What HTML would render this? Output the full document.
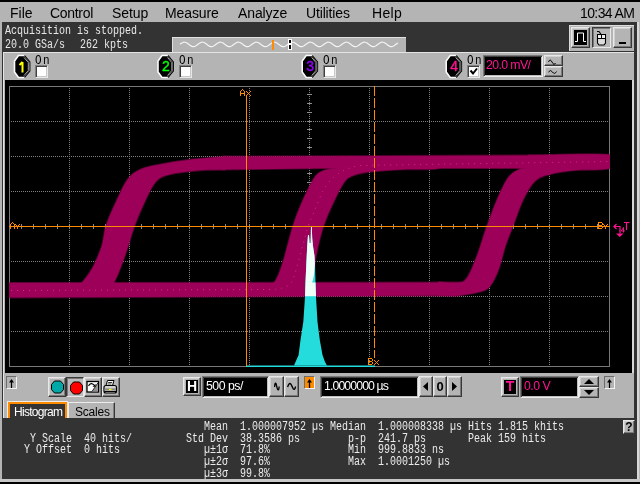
<!DOCTYPE html>
<html><head><meta charset="utf-8">
<style>
*{box-sizing:border-box}
html,body{margin:0;padding:0}
body{width:640px;height:484px;overflow:hidden;background:#b4b4b4;position:relative;font-family:"Liberation Sans",sans-serif}
.a{position:absolute}
.m{position:absolute;top:5px;font-size:14px;line-height:16px;color:#000;white-space:pre}
.mono{position:absolute;font-family:"Liberation Mono",monospace;font-size:10px;line-height:10px;white-space:pre;transform:scaleY(1.2);transform-origin:0 0}
svg{position:absolute;left:0;top:0;overflow:visible}
</style></head><body><div style="position:absolute;left:0;top:0;width:640px;height:484px;overflow:hidden;will-change:transform">
<div class="a" style="left:0px;top:0px;width:640px;height:2px;background:#000"></div>
<div class="m" style="left:10px;letter-spacing:0px">File</div>
<div class="m" style="left:50px;letter-spacing:-0.3px">Control</div>
<div class="m" style="left:112px;letter-spacing:-0.1px">Setup</div>
<div class="m" style="left:165px;letter-spacing:-0.1px">Measure</div>
<div class="m" style="left:238px;letter-spacing:-0.1px">Analyze</div>
<div class="m" style="left:306px;letter-spacing:-0.15px">Utilities</div>
<div class="m" style="left:372px;letter-spacing:0.3px">Help</div>
<div class="m" style="left:580px;letter-spacing:-0.6px">10:34 AM</div>
<div class="a" style="left:2px;top:22px;width:635px;height:457px;background:#333"></div>
<div class="a" style="left:637px;top:22px;width:2px;height:457px;background:#d8d8d8"></div>
<div class="a" style="left:3px;top:52px;width:631px;height:366px;background:#b4b4b4;border-top:1px solid #e4e4e4;border-left:1px solid #e4e4e4"></div>
<div class="mono" style="left:5px;top:26px;color:#e8e8e8">Acquisition is stopped.</div>
<div class="mono" style="left:5px;top:40px;color:#e8e8e8">20.0 GSa/s</div>
<div class="mono" style="left:80px;top:40px;color:#e8e8e8">262 kpts</div>
<div class="a" style="left:172px;top:37px;width:234px;height:15px;background:#b4b4b4;border-top:1px solid #e0e0e0;border-left:1px solid #e0e0e0"></div>
<svg width="640" height="60" viewBox="0 0 640 60"><path d="M180.0,44.32 L181.0,43.58 L182.0,42.93 L183.0,42.46 L184.0,42.22 L185.0,42.25 L186.0,42.53 L187.0,43.05 L188.0,43.72 L189.0,44.48 L190.0,45.22 L191.0,45.87 L192.0,46.34 L193.0,46.58 L194.0,46.55 L195.0,46.27 L196.0,45.75 L197.0,45.08 L198.0,44.32 L199.0,43.58 L200.0,42.93 L201.0,42.46 L202.0,42.22 L203.0,42.25 L204.0,42.53 L205.0,43.05 L206.0,43.72 L207.0,44.48 L208.0,45.22 L209.0,45.87 L210.0,46.34 L211.0,46.58 L212.0,46.55 L213.0,46.27 L214.0,45.75 L215.0,45.08 L216.0,44.32 L217.0,43.58 L218.0,42.93 L219.0,42.46 L220.0,42.22 L221.0,42.25 L222.0,42.53 L223.0,43.05 L224.0,43.72 L225.0,44.48 L226.0,45.22 L227.0,45.87 L228.0,46.34 L229.0,46.58 L230.0,46.55 L231.0,46.27 L232.0,45.75 L233.0,45.08 L234.0,44.32 L235.0,43.58 L236.0,42.93 L237.0,42.46 L238.0,42.22 L239.0,42.25 L240.0,42.53 L241.0,43.05 L242.0,43.72 L243.0,44.48 L244.0,45.22 L245.0,45.87 L246.0,46.34 L247.0,46.58 L248.0,46.55 L249.0,46.27 L250.0,45.75 L251.0,45.08 L252.0,44.32 L253.0,43.58 L254.0,42.93 L255.0,42.46 L256.0,42.22 L257.0,42.25 L258.0,42.53 L259.0,43.05 L260.0,43.72 L261.0,44.48 L262.0,45.22 L263.0,45.87 L264.0,46.34 L265.0,46.58 L266.0,46.55 L267.0,46.27 L268.0,45.75 L269.0,45.08 L270.0,44.32 L271.0,43.58 L272.0,42.93 L273.0,42.46 L274.0,42.22 L275.0,42.25 L276.0,42.53 L277.0,43.05 L278.0,43.72 L279.0,44.48 L280.0,45.22 L281.0,45.87 L282.0,46.34 L283.0,46.58 L284.0,46.55 L285.0,46.27 L286.0,45.75 L287.0,45.08 L288.0,44.32 L289.0,43.58 L290.0,42.93 L291.0,42.46 L292.0,42.22 L293.0,42.25 L294.0,42.53 L295.0,43.05 L296.0,43.72 L297.0,44.48 L298.0,45.22 L299.0,45.87 L300.0,46.34 L301.0,46.58 L302.0,46.55 L303.0,46.27 L304.0,45.75 L305.0,45.08 L306.0,44.32 L307.0,43.58 L308.0,42.93 L309.0,42.46 L310.0,42.22 L311.0,42.25 L312.0,42.53 L313.0,43.05 L314.0,43.72 L315.0,44.48 L316.0,45.22 L317.0,45.87 L318.0,46.34 L319.0,46.58 L320.0,46.55 L321.0,46.27 L322.0,45.75 L323.0,45.08 L324.0,44.32 L325.0,43.58 L326.0,42.93 L327.0,42.46 L328.0,42.22 L329.0,42.25 L330.0,42.53 L331.0,43.05 L332.0,43.72 L333.0,44.48 L334.0,45.22 L335.0,45.87 L336.0,46.34 L337.0,46.58 L338.0,46.55 L339.0,46.27 L340.0,45.75 L341.0,45.08 L342.0,44.32 L343.0,43.58 L344.0,42.93 L345.0,42.46 L346.0,42.22 L347.0,42.25 L348.0,42.53 L349.0,43.05 L350.0,43.72 L351.0,44.48 L352.0,45.22 L353.0,45.87 L354.0,46.34 L355.0,46.58 L356.0,46.55 L357.0,46.27 L358.0,45.75 L359.0,45.08 L360.0,44.32 L361.0,43.58 L362.0,42.93 L363.0,42.46 L364.0,42.22 L365.0,42.25 L366.0,42.53 L367.0,43.05 L368.0,43.72 L369.0,44.48 L370.0,45.22 L371.0,45.87 L372.0,46.34 L373.0,46.58 L374.0,46.55 L375.0,46.27 L376.0,45.75 L377.0,45.08 L378.0,44.32 L379.0,43.58 L380.0,42.93 L381.0,42.46 L382.0,42.22 L383.0,42.25 L384.0,42.53 L385.0,43.05 L386.0,43.72 L387.0,44.48 L388.0,45.22 L389.0,45.87 L390.0,46.34 L391.0,46.58 L392.0,46.55 L393.0,46.27 L394.0,45.75 L395.0,45.08 L396.0,44.32 L397.0,43.58 L398.0,42.93" fill="none" stroke="#f4f4f4" stroke-width="1.2"/><rect x="272" y="40" width="2" height="10" fill="#ff8c00"/><rect x="288" y="39" width="4" height="11" fill="#fff"/><rect x="289" y="40" width="2" height="3" fill="#000"/><rect x="289" y="45" width="2" height="4" fill="#000"/></svg>
<div class="a" style="left:569px;top:25px;width:65px;height:26px;background:#b4b4b4;border-top:1px solid #dcdcdc;border-left:1px solid #dcdcdc"></div>
<div class="a" style="left:571px;top:27px;width:19px;height:21px;background:#b4b4b4;border-top:1px solid #e8e8e8;border-left:1px solid #e8e8e8;border-right:1px solid #383838;border-bottom:1px solid #383838;box-shadow:inset -1px -1px 0 #787878, inset 1px 1px 0 #d0d0d0"></div>
<div class="a" style="left:574px;top:30px;width:13px;height:15px;background:#000"></div>
<div class="a" style="left:592px;top:27px;width:19px;height:21px;background:#b8b8b8;border-top:1px solid #383838;border-left:1px solid #383838;border-right:1px solid #e8e8e8;border-bottom:1px solid #e8e8e8;box-shadow:inset 1px 1px 0 #787878"></div>
<div class="a" style="left:613px;top:27px;width:19px;height:21px;background:#b4b4b4;border-top:1px solid #e8e8e8;border-left:1px solid #e8e8e8;border-right:1px solid #383838;border-bottom:1px solid #383838;box-shadow:inset -1px -1px 0 #787878, inset 1px 1px 0 #d0d0d0"></div>
<div class="a" style="left:619px;top:42px;width:7px;height:2px;background:#000"></div>
<svg width="640" height="60" viewBox="0 0 640 60">
<path d="M575,41.5h2.5v-8.5h6v8.5h2.5" fill="none" stroke="#fff" stroke-width="1"/>
<path d="M597,31.5 h2 l1.8,2.5" stroke="#000" fill="none" stroke-width="1.1"/>
<path d="M597.5,34.5 h8 v8.5 l-1.5,2 h-5 l-1.5,-2 z" fill="#dcdcdc" stroke="#000" stroke-width="1.1"/>
<path d="M597.5,38.5 h8 M601.5,34.5 v4" stroke="#000" stroke-width="1"/>
<rect x="598.2" y="35.2" width="2.8" height="2.8" fill="#f4f4f4"/><rect x="602.2" y="35.2" width="2.8" height="2.8" fill="#f4f4f4"/>
</svg>
<svg width="640" height="90" viewBox="0 0 640 90"><polygon points="18.5,55.5 24.5,55.5 30.0,62 30.0,71 24.5,77.5 18.5,77.5 14.5,72 14.5,61" fill="#000" stroke="#fafafa" stroke-width="1.6"/><path d="M24.5,55.5 L30.0,62 L30.0,71 L24.5,77.5" fill="none" stroke="#101010" stroke-width="1.2"/><path d="M24.0,57.5 L28.3,62.5 L28.3,70.5 L24.0,75.5" fill="none" stroke="#d0d0d0" stroke-width="0.8"/></svg>
<svg width="640" height="90" viewBox="0 0 640 90"><path d="M22.5,62v10.5M19.5,65l3,-3" stroke="#ffff00" stroke-width="2" fill="none"/></svg>
<div class="mono" style="left:35px;top:55px;color:#000;font-size:11px;letter-spacing:1.4px;transform:scaleY(1.15)">On</div>
<div class="a" style="left:35px;top:65px;width:13px;height:13px;background:#fff;border-top:1px solid #808080;border-left:1px solid #808080;border-right:1px solid #e8e8e8;border-bottom:1px solid #e8e8e8;box-shadow:inset 1px 1px 0 #404040, inset -1px -1px 0 #c8c8c8"></div>
<svg width="640" height="90" viewBox="0 0 640 90"><polygon points="162,55.5 168,55.5 173.5,62 173.5,71 168,77.5 162,77.5 158,72 158,61" fill="#000" stroke="#fafafa" stroke-width="1.6"/><path d="M168,55.5 L173.5,62 L173.5,71 L168,77.5" fill="none" stroke="#101010" stroke-width="1.2"/><path d="M167.5,57.5 L171.8,62.5 L171.8,70.5 L167.5,75.5" fill="none" stroke="#d0d0d0" stroke-width="0.8"/></svg>
<div class="a" style="left:158.5px;top:58px;white-space:pre;width:15px;text-align:center;font-size:14px;line-height:17px;font-weight:normal;color:#00ff00;-webkit-text-stroke:0.4px #00ff00">2</div>
<div class="mono" style="left:179px;top:55px;color:#000;font-size:11px;letter-spacing:1.4px;transform:scaleY(1.15)">On</div>
<div class="a" style="left:179px;top:65px;width:13px;height:13px;background:#fff;border-top:1px solid #808080;border-left:1px solid #808080;border-right:1px solid #e8e8e8;border-bottom:1px solid #e8e8e8;box-shadow:inset 1px 1px 0 #404040, inset -1px -1px 0 #c8c8c8"></div>
<svg width="640" height="90" viewBox="0 0 640 90"><polygon points="306.2,55.5 312.2,55.5 317.7,62 317.7,71 312.2,77.5 306.2,77.5 302.2,72 302.2,61" fill="#000" stroke="#fafafa" stroke-width="1.6"/><path d="M312.2,55.5 L317.7,62 L317.7,71 L312.2,77.5" fill="none" stroke="#101010" stroke-width="1.2"/><path d="M311.7,57.5 L316.0,62.5 L316.0,70.5 L311.7,75.5" fill="none" stroke="#d0d0d0" stroke-width="0.8"/></svg>
<div class="a" style="left:302.7px;top:58px;white-space:pre;width:15px;text-align:center;font-size:14px;line-height:17px;font-weight:normal;color:#9400ff;-webkit-text-stroke:0.4px #9400ff">3</div>
<div class="mono" style="left:323px;top:55px;color:#000;font-size:11px;letter-spacing:1.4px;transform:scaleY(1.15)">On</div>
<div class="a" style="left:323px;top:65px;width:13px;height:13px;background:#fff;border-top:1px solid #808080;border-left:1px solid #808080;border-right:1px solid #e8e8e8;border-bottom:1px solid #e8e8e8;box-shadow:inset 1px 1px 0 #404040, inset -1px -1px 0 #c8c8c8"></div>
<svg width="640" height="90" viewBox="0 0 640 90"><polygon points="450.2,55.5 456.2,55.5 461.7,62 461.7,71 456.2,77.5 450.2,77.5 446.2,72 446.2,61" fill="#000" stroke="#fafafa" stroke-width="1.6"/><path d="M456.2,55.5 L461.7,62 L461.7,71 L456.2,77.5" fill="none" stroke="#101010" stroke-width="1.2"/><path d="M455.7,57.5 L460.0,62.5 L460.0,70.5 L455.7,75.5" fill="none" stroke="#d0d0d0" stroke-width="0.8"/></svg>
<div class="a" style="left:446.7px;top:58px;white-space:pre;width:15px;text-align:center;font-size:14px;line-height:17px;font-weight:normal;color:#ff1493;-webkit-text-stroke:0.4px #ff1493">4</div>
<div class="mono" style="left:467px;top:55px;color:#000;font-size:11px;letter-spacing:1.4px;transform:scaleY(1.15)">On</div>
<div class="a" style="left:467px;top:65px;width:13px;height:13px;background:#fff;border-top:1px solid #808080;border-left:1px solid #808080;border-right:1px solid #e8e8e8;border-bottom:1px solid #e8e8e8;box-shadow:inset 1px 1px 0 #404040, inset -1px -1px 0 #c8c8c8"></div>
<svg width="640" height="90" viewBox="0 0 640 90"><path d="M470.5,70.5l2.5,3l4,-5" fill="none" stroke="#000" stroke-width="2"/></svg>
<div class="a" style="left:483px;top:55px;width:60px;height:22px;background:#000;border-top:1px solid #787878;border-left:1px solid #787878;border-right:1px solid #ececec;border-bottom:1px solid #ececec;box-shadow:inset 1px 1px 0 #404040, inset -1px -1px 0 #c0c0c0"></div>
<div class="a" style="left:486px;top:58px;white-space:pre;font-size:12.3px;line-height:14px;letter-spacing:-0.6px;color:#ff1493">20.0 mV/</div>
<div class="a" style="left:544px;top:55px;width:19px;height:11px;background:#b4b4b4;border-top:1px solid #e8e8e8;border-left:1px solid #e8e8e8;border-right:1px solid #383838;border-bottom:1px solid #383838;box-shadow:inset -1px -1px 0 #787878, inset 1px 1px 0 #d0d0d0"></div>
<div class="a" style="left:544px;top:66px;width:19px;height:11px;background:#b4b4b4;border-top:1px solid #e8e8e8;border-left:1px solid #e8e8e8;border-right:1px solid #383838;border-bottom:1px solid #383838;box-shadow:inset -1px -1px 0 #787878, inset 1px 1px 0 #d0d0d0"></div>
<svg width="640" height="90" viewBox="0 0 640 90"><path d="M548.5,62 q1.5,-4 3.5,0 t3.5,1" fill="none" stroke="#000"/><path d="M548.5,72 q2,-3 4,0 t4,-0.5" fill="none" stroke="#000"/></svg>
<div class="a" style="left:5px;top:80px;width:627px;height:293px;background:#000"></div>
<div class="a" style="left:632px;top:80px;width:2px;height:293px;background:#d8d8d8"></div>
<svg width="640" height="484" viewBox="0 0 640 484">
<defs><clipPath id="gc"><rect x="9" y="86" width="601" height="281"/></clipPath>
<clipPath id="wc"><path d="M74.5,289.0C75.8,287.9 79.5,285.7 82.5,282.2C85.5,278.7 89.2,274.1 92.5,268.0C95.8,261.9 99.8,252.4 102.0,245.4C104.2,238.4 103.5,233.6 106.0,226.0C108.5,218.4 113.3,207.8 117.0,200.0C120.7,192.2 123.9,184.2 128.0,179.0C132.1,173.8 135.2,171.6 141.5,169.0C147.8,166.4 157.2,165.1 165.5,163.5C173.8,161.9 181.7,160.7 191.5,159.5C201.3,158.3 219.0,157.0 224.5,156.5L224.5,169.8C220.4,169.9 209.2,169.5 200.0,170.3C190.8,171.1 176.8,172.6 169.5,174.5C162.2,176.4 160.0,177.2 156.0,181.5C152.0,185.8 149.1,192.6 145.5,200.0C141.9,207.4 137.9,216.7 134.5,226.0C131.1,235.3 128.2,246.6 124.8,256.0C121.4,265.4 117.4,276.7 114.0,282.2C110.6,287.7 106.1,287.9 104.5,289.0Z"/><path d="M263.0,289.0C265.0,287.8 271.7,286.0 275.0,281.5C278.3,277.0 280.0,271.2 283.0,262.0C286.0,252.8 289.7,236.3 293.0,226.0C296.3,215.7 299.3,208.2 303.0,200.0C306.7,191.8 311.5,181.9 315.0,177.0C318.5,172.1 320.2,172.0 324.0,170.5C327.8,169.0 335.7,168.4 338.0,168.0L338.0,158.0C354.7,158.0 421.3,156.3 438.0,158.0C454.7,159.7 443.8,166.4 438.0,168.3C432.2,170.2 414.3,168.8 403.0,169.4C391.7,170.0 378.2,170.8 370.0,171.8C361.8,172.8 358.2,173.7 354.0,175.2C349.8,176.7 348.2,176.9 345.0,181.0C341.8,185.1 338.1,192.5 334.5,200.0C330.9,207.5 326.6,216.7 323.5,226.0C320.4,235.3 317.8,246.7 316.0,256.0C314.2,265.3 314.7,276.1 312.5,281.6C310.3,287.1 304.6,287.8 303.0,289.0Z"/><path d="M439.0,282.0C443.0,282.0 456.9,285.8 463.0,282.0C469.1,278.2 471.6,268.8 475.6,259.5C479.6,250.2 483.4,235.9 487.0,226.0C490.6,216.1 493.5,208.0 497.0,200.0C500.5,192.0 504.3,183.1 508.0,178.0C511.7,172.9 515.2,171.2 519.0,169.5C522.8,167.8 529.0,168.2 531.0,168.0L529.0,155.5C542.3,155.4 595.7,152.9 609.0,155.0C622.3,157.1 614.5,165.8 609.0,168.3C603.5,170.8 585.4,169.2 575.7,170.2C566.0,171.1 557.8,172.2 551.0,174.0C544.2,175.8 539.7,176.7 535.0,181.0C530.3,185.3 526.7,192.5 523.0,200.0C519.3,207.5 515.9,218.4 513.0,226.0C510.1,233.6 507.9,238.1 505.5,245.4C503.1,252.7 501.0,263.2 498.4,270.0C495.8,276.8 492.9,282.4 490.0,286.0C487.1,289.6 486.2,289.9 481.0,291.5C475.8,293.1 466.0,294.7 459.0,295.3C452.0,295.9 442.3,295.4 439.0,295.4Z"/><path d="M9,282.8 L463,282.5 L476,286.5 L459,295.6 L9,297.6Z"/><path d="M224,156.5 L610,155.0 L610,168.2 L330,168.2 L224,169.6Z"/></clipPath></defs>
<rect x="9.5" y="86.5" width="600" height="280" fill="none" stroke="#787878" stroke-width="1"/>
<line x1="69.5" y1="88" x2="69.5" y2="366" stroke="#808080" stroke-dasharray="1 1"/>
<line x1="129.5" y1="88" x2="129.5" y2="366" stroke="#808080" stroke-dasharray="1 1"/>
<line x1="189.5" y1="88" x2="189.5" y2="366" stroke="#808080" stroke-dasharray="1 1"/>
<line x1="249.5" y1="88" x2="249.5" y2="366" stroke="#808080" stroke-dasharray="1 1"/>
<line x1="369.5" y1="88" x2="369.5" y2="366" stroke="#808080" stroke-dasharray="1 1"/>
<line x1="429.5" y1="88" x2="429.5" y2="366" stroke="#808080" stroke-dasharray="1 1"/>
<line x1="489.5" y1="88" x2="489.5" y2="366" stroke="#808080" stroke-dasharray="1 1"/>
<line x1="549.5" y1="88" x2="549.5" y2="366" stroke="#808080" stroke-dasharray="1 1"/>
<line x1="11" y1="121.5" x2="609" y2="121.5" stroke="#808080" stroke-dasharray="1 1"/>
<line x1="11" y1="156.5" x2="609" y2="156.5" stroke="#808080" stroke-dasharray="1 1"/>
<line x1="11" y1="191.5" x2="609" y2="191.5" stroke="#808080" stroke-dasharray="1 1"/>
<line x1="11" y1="261.5" x2="609" y2="261.5" stroke="#808080" stroke-dasharray="1 1"/>
<line x1="11" y1="296.5" x2="609" y2="296.5" stroke="#808080" stroke-dasharray="1 1"/>
<line x1="11" y1="331.5" x2="609" y2="331.5" stroke="#808080" stroke-dasharray="1 1"/>
<line x1="309.5" y1="88" x2="309.5" y2="366" stroke="#808080" stroke-dasharray="1 1"/>
<path d="M307,94.5h5 M307,103.5h5 M307,112.5h5 M307,121.5h5 M307,129.5h5 M307,138.5h5 M307,147.5h5 M307,156.5h5 M307,164.5h5 M307,173.5h5 M307,182.5h5 M307,191.5h5 M307,199.5h5 M307,208.5h5 M307,217.5h5 M307,226.5h5 M307,234.5h5 M307,243.5h5 M307,252.5h5 M307,261.5h5 M307,269.5h5 M307,278.5h5 M307,287.5h5 M307,296.5h5 M307,304.5h5 M307,313.5h5 M307,322.5h5 M307,331.5h5 M307,339.5h5 M307,348.5h5 M307,357.5h5 M21.5,224v5 M33.5,224v5 M45.5,224v5 M57.5,224v5 M69.5,224v5 M81.5,224v5 M93.5,224v5 M105.5,224v5 M117.5,224v5 M129.5,224v5 M141.5,224v5 M153.5,224v5 M165.5,224v5 M177.5,224v5 M189.5,224v5 M201.5,224v5 M213.5,224v5 M225.5,224v5 M237.5,224v5 M249.5,224v5 M261.5,224v5 M273.5,224v5 M285.5,224v5 M297.5,224v5 M309.5,224v5 M321.5,224v5 M333.5,224v5 M345.5,224v5 M357.5,224v5 M369.5,224v5 M381.5,224v5 M393.5,224v5 M405.5,224v5 M417.5,224v5 M429.5,224v5 M441.5,224v5 M453.5,224v5 M465.5,224v5 M477.5,224v5 M489.5,224v5 M501.5,224v5 M513.5,224v5 M525.5,224v5 M537.5,224v5 M549.5,224v5 M561.5,224v5 M573.5,224v5 M585.5,224v5 M597.5,224v5" stroke="#8c8c8c" stroke-width="1" fill="none"/>
<g clip-path="url(#gc)"><g fill="none" stroke="#9c0058" stroke-width="1.8" stroke-opacity="0.5"><path d="M74.5,289.0C75.8,287.9 79.5,285.7 82.5,282.2C85.5,278.7 89.2,274.1 92.5,268.0C95.8,261.9 99.8,252.4 102.0,245.4C104.2,238.4 103.5,233.6 106.0,226.0C108.5,218.4 113.3,207.8 117.0,200.0C120.7,192.2 123.9,184.2 128.0,179.0C132.1,173.8 135.2,171.6 141.5,169.0C147.8,166.4 157.2,165.1 165.5,163.5C173.8,161.9 181.7,160.7 191.5,159.5C201.3,158.3 219.0,157.0 224.5,156.5L224.5,169.8C220.4,169.9 209.2,169.5 200.0,170.3C190.8,171.1 176.8,172.6 169.5,174.5C162.2,176.4 160.0,177.2 156.0,181.5C152.0,185.8 149.1,192.6 145.5,200.0C141.9,207.4 137.9,216.7 134.5,226.0C131.1,235.3 128.2,246.6 124.8,256.0C121.4,265.4 117.4,276.7 114.0,282.2C110.6,287.7 106.1,287.9 104.5,289.0Z"/><path d="M263.0,289.0C265.0,287.8 271.7,286.0 275.0,281.5C278.3,277.0 280.0,271.2 283.0,262.0C286.0,252.8 289.7,236.3 293.0,226.0C296.3,215.7 299.3,208.2 303.0,200.0C306.7,191.8 311.5,181.9 315.0,177.0C318.5,172.1 320.2,172.0 324.0,170.5C327.8,169.0 335.7,168.4 338.0,168.0L338.0,158.0C354.7,158.0 421.3,156.3 438.0,158.0C454.7,159.7 443.8,166.4 438.0,168.3C432.2,170.2 414.3,168.8 403.0,169.4C391.7,170.0 378.2,170.8 370.0,171.8C361.8,172.8 358.2,173.7 354.0,175.2C349.8,176.7 348.2,176.9 345.0,181.0C341.8,185.1 338.1,192.5 334.5,200.0C330.9,207.5 326.6,216.7 323.5,226.0C320.4,235.3 317.8,246.7 316.0,256.0C314.2,265.3 314.7,276.1 312.5,281.6C310.3,287.1 304.6,287.8 303.0,289.0Z"/><path d="M439.0,282.0C443.0,282.0 456.9,285.8 463.0,282.0C469.1,278.2 471.6,268.8 475.6,259.5C479.6,250.2 483.4,235.9 487.0,226.0C490.6,216.1 493.5,208.0 497.0,200.0C500.5,192.0 504.3,183.1 508.0,178.0C511.7,172.9 515.2,171.2 519.0,169.5C522.8,167.8 529.0,168.2 531.0,168.0L529.0,155.5C542.3,155.4 595.7,152.9 609.0,155.0C622.3,157.1 614.5,165.8 609.0,168.3C603.5,170.8 585.4,169.2 575.7,170.2C566.0,171.1 557.8,172.2 551.0,174.0C544.2,175.8 539.7,176.7 535.0,181.0C530.3,185.3 526.7,192.5 523.0,200.0C519.3,207.5 515.9,218.4 513.0,226.0C510.1,233.6 507.9,238.1 505.5,245.4C503.1,252.7 501.0,263.2 498.4,270.0C495.8,276.8 492.9,282.4 490.0,286.0C487.1,289.6 486.2,289.9 481.0,291.5C475.8,293.1 466.0,294.7 459.0,295.3C452.0,295.9 442.3,295.4 439.0,295.4Z"/><path d="M9,282.8 L463,282.5 L476,286.5 L459,295.6 L9,297.6Z"/><path d="M224,156.5 L610,155.0 L610,168.2 L330,168.2 L224,169.6Z"/></g><g fill="#9c0058"><path d="M74.5,289.0C75.8,287.9 79.5,285.7 82.5,282.2C85.5,278.7 89.2,274.1 92.5,268.0C95.8,261.9 99.8,252.4 102.0,245.4C104.2,238.4 103.5,233.6 106.0,226.0C108.5,218.4 113.3,207.8 117.0,200.0C120.7,192.2 123.9,184.2 128.0,179.0C132.1,173.8 135.2,171.6 141.5,169.0C147.8,166.4 157.2,165.1 165.5,163.5C173.8,161.9 181.7,160.7 191.5,159.5C201.3,158.3 219.0,157.0 224.5,156.5L224.5,169.8C220.4,169.9 209.2,169.5 200.0,170.3C190.8,171.1 176.8,172.6 169.5,174.5C162.2,176.4 160.0,177.2 156.0,181.5C152.0,185.8 149.1,192.6 145.5,200.0C141.9,207.4 137.9,216.7 134.5,226.0C131.1,235.3 128.2,246.6 124.8,256.0C121.4,265.4 117.4,276.7 114.0,282.2C110.6,287.7 106.1,287.9 104.5,289.0Z"/><path d="M263.0,289.0C265.0,287.8 271.7,286.0 275.0,281.5C278.3,277.0 280.0,271.2 283.0,262.0C286.0,252.8 289.7,236.3 293.0,226.0C296.3,215.7 299.3,208.2 303.0,200.0C306.7,191.8 311.5,181.9 315.0,177.0C318.5,172.1 320.2,172.0 324.0,170.5C327.8,169.0 335.7,168.4 338.0,168.0L338.0,158.0C354.7,158.0 421.3,156.3 438.0,158.0C454.7,159.7 443.8,166.4 438.0,168.3C432.2,170.2 414.3,168.8 403.0,169.4C391.7,170.0 378.2,170.8 370.0,171.8C361.8,172.8 358.2,173.7 354.0,175.2C349.8,176.7 348.2,176.9 345.0,181.0C341.8,185.1 338.1,192.5 334.5,200.0C330.9,207.5 326.6,216.7 323.5,226.0C320.4,235.3 317.8,246.7 316.0,256.0C314.2,265.3 314.7,276.1 312.5,281.6C310.3,287.1 304.6,287.8 303.0,289.0Z"/><path d="M439.0,282.0C443.0,282.0 456.9,285.8 463.0,282.0C469.1,278.2 471.6,268.8 475.6,259.5C479.6,250.2 483.4,235.9 487.0,226.0C490.6,216.1 493.5,208.0 497.0,200.0C500.5,192.0 504.3,183.1 508.0,178.0C511.7,172.9 515.2,171.2 519.0,169.5C522.8,167.8 529.0,168.2 531.0,168.0L529.0,155.5C542.3,155.4 595.7,152.9 609.0,155.0C622.3,157.1 614.5,165.8 609.0,168.3C603.5,170.8 585.4,169.2 575.7,170.2C566.0,171.1 557.8,172.2 551.0,174.0C544.2,175.8 539.7,176.7 535.0,181.0C530.3,185.3 526.7,192.5 523.0,200.0C519.3,207.5 515.9,218.4 513.0,226.0C510.1,233.6 507.9,238.1 505.5,245.4C503.1,252.7 501.0,263.2 498.4,270.0C495.8,276.8 492.9,282.4 490.0,286.0C487.1,289.6 486.2,289.9 481.0,291.5C475.8,293.1 466.0,294.7 459.0,295.3C452.0,295.9 442.3,295.4 439.0,295.4Z"/><path d="M9,282.8 L463,282.5 L476,286.5 L459,295.6 L9,297.6Z"/><path d="M224,156.5 L610,155.0 L610,168.2 L330,168.2 L224,169.6Z"/></g><path d="M11,290.5 L270,289.5 Q288,289.5 293,280 L300,256 L308,226 L319,200 Q330,170 360,165.5 L609,161.5" fill="none" stroke="#ff30b0" stroke-width="1" stroke-opacity="0.75" stroke-dasharray="1 5"/></g>
<path d="M311.8,226.5 L312.2,238.0 L313.0,246.0 L314.5,256.0 L315.0,266.0 L315.5,282.0 L316.0,297.0 L317.5,322.0 L319.8,340.0 L322.5,355.0 L325.0,362.0 L327.0,365.5 L294.0,365.5 L295.5,362.0 L298.6,355.0 L300.5,340.0 L303.3,322.0 L305.0,297.0 L305.5,282.0 L306.5,260.0 L307.2,246.0 L308.0,235.0 L309.0,235.0 L309.6,243.0 L310.6,243.0 L311.0,226.5Z" fill="#24dcdc"/>
<path d="M311.8,226.5 L312.2,238.0 L313.0,246.0 L314.5,256.0 L315.0,266.0 L315.5,282.0 L316.0,297.0 L317.5,322.0 L319.8,340.0 L322.5,355.0 L325.0,362.0 L327.0,365.5 L294.0,365.5 L295.5,362.0 L298.6,355.0 L300.5,340.0 L303.3,322.0 L305.0,297.0 L305.5,282.0 L306.5,260.0 L307.2,246.0 L308.0,235.0 L309.0,235.0 L309.6,243.0 L310.6,243.0 L311.0,226.5Z" fill="#f0fff8" clip-path="url(#wc)"/>
<rect x="246" y="365.5" width="129" height="1.5" fill="#24dcdc"/>
<rect x="9" y="226" width="601" height="1" fill="#ff8c00"/>
<rect x="246" y="95" width="1" height="271" fill="#ff8c00"/>
<line x1="374.5" y1="86" x2="374.5" y2="358" stroke="#ff8c00" stroke-width="1" stroke-dasharray="10 2"/>
<path d="M242,89h1v1h-1zM241,90h1v1h-1zM243,90h1v1h-1zM240,91h1v1h-1zM244,91h1v1h-1zM240,92h1v1h-1zM244,92h1v1h-1zM240,93h5v1h-5zM240,94h1v1h-1zM244,94h1v1h-1zM240,95h1v1h-1zM244,95h1v1h-1zM246,91h1v1h-1zM250,91h1v1h-1zM247,92h1v1h-1zM249,92h1v1h-1zM248,93h1v1h-1zM247,94h1v1h-1zM249,94h1v1h-1zM246,95h1v1h-1zM250,95h1v1h-1zM368,358h4v1h-4zM368,359h1v1h-1zM372,359h1v1h-1zM368,360h1v1h-1zM372,360h1v1h-1zM368,361h4v1h-4zM368,362h1v1h-1zM372,362h1v1h-1zM368,363h1v1h-1zM372,363h1v1h-1zM368,364h4v1h-4zM374,360h1v1h-1zM378,360h1v1h-1zM375,361h1v1h-1zM377,361h1v1h-1zM376,362h1v1h-1zM375,363h1v1h-1zM377,363h1v1h-1zM374,364h1v1h-1zM378,364h1v1h-1zM12,222h1v1h-1zM11,223h1v1h-1zM13,223h1v1h-1zM10,224h1v1h-1zM14,224h1v1h-1zM10,225h1v1h-1zM14,225h1v1h-1zM10,226h5v1h-5zM10,227h1v1h-1zM14,227h1v1h-1zM10,228h1v1h-1zM14,228h1v1h-1zM15,224h1v1h-1zM19,224h1v1h-1zM16,225h1v1h-1zM18,225h1v1h-1zM17,226h1v1h-1zM17,227h1v1h-1zM17,228h1v1h-1zM598,222h4v1h-4zM598,223h1v1h-1zM602,223h1v1h-1zM598,224h1v1h-1zM602,224h1v1h-1zM598,225h4v1h-4zM598,226h1v1h-1zM602,226h1v1h-1zM598,227h1v1h-1zM602,227h1v1h-1zM598,228h4v1h-4zM603,224h1v1h-1zM607,224h1v1h-1zM604,225h1v1h-1zM606,225h1v1h-1zM605,226h1v1h-1zM605,227h1v1h-1zM605,228h1v1h-1z" fill="#ff8c00"/>
<path d="M613.5,226.5h6.5v7M624,222.5h5.5M626.5,222.5v7.5" stroke="#ff1493" stroke-width="1.2" fill="none"/>
<path d="M614,226.5l2.5,-2.5M614,226.5l2.5,2.5" stroke="#ff1493" stroke-width="1.1"/>
<path d="M616,233.5h7.5l-3.75,3.5z" fill="#ff1493"/>
<path d="M623.5,227.5l-2.2,3.5h3.5M623.5,227.5v5" stroke="#ff1493" stroke-width="0.9" fill="none"/>
</svg>
<div class="a" style="left:6px;top:376px;width:11px;height:13px;background:#b4b4b4;border-top:1px solid #6c6c6c;border-left:1px solid #6c6c6c;border-right:1px solid #f4f4f4;border-bottom:1px solid #f4f4f4"></div>
<div class="a" style="left:48px;top:377px;width:18px;height:20px;background:#b4b4b4;border-top:1px solid #e8e8e8;border-left:1px solid #e8e8e8;border-right:1px solid #383838;border-bottom:1px solid #383838;box-shadow:inset -1px -1px 0 #787878, inset 1px 1px 0 #d0d0d0"></div>
<div class="a" style="left:66px;top:377px;width:18px;height:20px;background:#bcbcbc;border-top:1px solid #383838;border-left:1px solid #383838;border-right:1px solid #e8e8e8;border-bottom:1px solid #e8e8e8;box-shadow:inset 1px 1px 0 #787878"></div>
<div class="a" style="left:84px;top:377px;width:18px;height:20px;background:#b4b4b4;border-top:1px solid #e8e8e8;border-left:1px solid #e8e8e8;border-right:1px solid #383838;border-bottom:1px solid #383838;box-shadow:inset -1px -1px 0 #787878, inset 1px 1px 0 #d0d0d0"></div>
<div class="a" style="left:102px;top:377px;width:18px;height:20px;background:#b4b4b4;border-top:1px solid #e8e8e8;border-left:1px solid #e8e8e8;border-right:1px solid #383838;border-bottom:1px solid #383838;box-shadow:inset -1px -1px 0 #787878, inset 1px 1px 0 #d0d0d0"></div>
<svg width="640" height="484" viewBox="0 0 640 484">
<path d="M11.5,380v8" stroke="#000" stroke-width="1.2"/><path d="M9,382.5l2.5,-3.5l2.5,3.5z" fill="#000"/>
<path d="M54.5,381h6l3,3.5v5l-3,3.5h-6l-3,-3.5v-5z" fill="#00a8a8" stroke="#000"/>
<path d="M73.5,382h6l3,3.5v5l-3,3.5h-6l-3,-3.5v-5z" fill="#ff0000" stroke="#000"/>
<rect x="87" y="381.5" width="11.5" height="10.5" fill="#fff" stroke="#000" stroke-width="1.3"/>
<path d="M92,391.5 L97.8,383 V391.5z" fill="#909090"/>
<path d="M92,391.5 L97.8,383" stroke="#000" stroke-width="0.8"/>
<path d="M88.5,385.8 Q91,382 94,385" fill="none" stroke="#000" stroke-width="1.2"/>
<path d="M92.5,386.8 h3 v-3z" fill="#000"/>
<path d="M107.5,380.5 h6.5 l-1.5,5 h-6.5z" fill="#fff" stroke="#000"/>
<path d="M108.2,382.5h4M107.5,384h4" stroke="#000" stroke-width="0.8"/>
<rect x="104" y="385.5" width="12.5" height="7.5" rx="2" fill="#d0d0d0" stroke="#000" stroke-width="1.2"/>
<rect x="104.6" y="388.3" width="11.3" height="2.2" fill="#8c8c8c"/>
<rect x="109" y="388.8" width="2.5" height="1.3" fill="#ff0"/>
<path d="M104.5,391.5h11.5" stroke="#000"/>
</svg>
<div class="a" style="left:183px;top:377px;width:18px;height:19px;background:#b4b4b4;border-top:1px solid #e8e8e8;border-left:1px solid #e8e8e8;border-right:1px solid #383838;border-bottom:1px solid #383838;box-shadow:inset -1px -1px 0 #787878, inset 1px 1px 0 #d0d0d0"></div>
<div class="a" style="left:186px;top:380px;width:12px;height:13px;background:#000"></div>
<div class="a" style="left:186px;top:379px;white-space:pre;width:12px;text-align:center;font-size:14px;line-height:15px;font-weight:bold;color:#fff">H</div>
<div class="a" style="left:202px;top:376px;width:67px;height:22px;background:#000;border-top:1px solid #787878;border-left:1px solid #787878;border-right:1px solid #ececec;border-bottom:1px solid #ececec;box-shadow:inset 1px 1px 0 #404040, inset -1px -1px 0 #c0c0c0"></div>
<div class="a" style="left:206px;top:379px;white-space:pre;font-size:12.3px;line-height:14px;letter-spacing:-0.5px;color:#fff">500 ps/</div>
<div class="a" style="left:269px;top:376px;width:15px;height:21px;background:#b4b4b4;border-top:1px solid #e8e8e8;border-left:1px solid #e8e8e8;border-right:1px solid #383838;border-bottom:1px solid #383838;box-shadow:inset -1px -1px 0 #787878, inset 1px 1px 0 #d0d0d0"></div>
<div class="a" style="left:284px;top:376px;width:15px;height:21px;background:#b4b4b4;border-top:1px solid #e8e8e8;border-left:1px solid #e8e8e8;border-right:1px solid #383838;border-bottom:1px solid #383838;box-shadow:inset -1px -1px 0 #787878, inset 1px 1px 0 #d0d0d0"></div>
<svg width="640" height="484" viewBox="0 0 640 484">
<path d="M274.6,387 Q274.8,382 276,383.5 L277.4,389 Q278.8,391.5 279.2,386.5" fill="none" stroke="#000" stroke-width="1.3"/>
<path d="M287.6,387 Q289.4,381.5 291.2,384.6 L293,388.4 Q294.6,391 295.6,386.5" fill="none" stroke="#000" stroke-width="1.3"/>
</svg>
<div class="a" style="left:304px;top:376px;width:11px;height:13px;background:#ff8c00;border-top:1px solid #6c6c6c;border-left:1px solid #6c6c6c;border-right:1px solid #f4f4f4;border-bottom:1px solid #f4f4f4"></div>
<svg width="640" height="484" viewBox="0 0 640 484"><path d="M309.5,380v8" stroke="#000" stroke-width="1.3"/><path d="M307,382.5l2.5,-3.5l2.5,3.5z" fill="#000"/></svg>
<div class="a" style="left:320px;top:376px;width:99px;height:22px;background:#000;border-top:1px solid #787878;border-left:1px solid #787878;border-right:1px solid #ececec;border-bottom:1px solid #ececec;box-shadow:inset 1px 1px 0 #404040, inset -1px -1px 0 #c0c0c0"></div>
<div class="a" style="left:324px;top:379px;white-space:pre;font-size:12.3px;line-height:14px;letter-spacing:-0.9px;color:#fff">1.0000000 µs</div>
<div class="a" style="left:419px;top:376px;width:14px;height:21px;background:#b4b4b4;border-top:1px solid #e8e8e8;border-left:1px solid #e8e8e8;border-right:1px solid #383838;border-bottom:1px solid #383838;box-shadow:inset -1px -1px 0 #787878, inset 1px 1px 0 #d0d0d0"></div>
<div class="a" style="left:433px;top:376px;width:14px;height:21px;background:#b4b4b4;border-top:1px solid #e8e8e8;border-left:1px solid #e8e8e8;border-right:1px solid #383838;border-bottom:1px solid #383838;box-shadow:inset -1px -1px 0 #787878, inset 1px 1px 0 #d0d0d0"></div>
<div class="a" style="left:447px;top:376px;width:15px;height:21px;background:#b4b4b4;border-top:1px solid #e8e8e8;border-left:1px solid #e8e8e8;border-right:1px solid #383838;border-bottom:1px solid #383838;box-shadow:inset -1px -1px 0 #787878, inset 1px 1px 0 #d0d0d0"></div>
<svg width="640" height="484" viewBox="0 0 640 484"><path d="M423,386.5l5,-4.5v9z" fill="#000"/><path d="M452,382v9l5,-4.5z" fill="#000"/></svg>
<div class="a" style="left:433px;top:379px;white-space:pre;width:14px;text-align:center;font-size:13px;line-height:15px;font-weight:bold;color:#000">0</div>
<div class="a" style="left:501px;top:377px;width:18px;height:20px;background:#b4b4b4;border-top:1px solid #e8e8e8;border-left:1px solid #e8e8e8;border-right:1px solid #383838;border-bottom:1px solid #383838;box-shadow:inset -1px -1px 0 #787878, inset 1px 1px 0 #d0d0d0"></div>
<div class="a" style="left:504px;top:380px;width:12px;height:14px;background:#000"></div>
<div class="a" style="left:504px;top:379px;white-space:pre;width:12px;text-align:center;font-size:14px;line-height:15px;font-weight:bold;color:#ff1493">T</div>
<div class="a" style="left:520px;top:376px;width:59px;height:22px;background:#000;border-top:1px solid #787878;border-left:1px solid #787878;border-right:1px solid #ececec;border-bottom:1px solid #ececec;box-shadow:inset 1px 1px 0 #404040, inset -1px -1px 0 #c0c0c0"></div>
<div class="a" style="left:524px;top:379px;white-space:pre;font-size:12.3px;line-height:14px;letter-spacing:-0.5px;color:#ff1493">0.0 V</div>
<div class="a" style="left:579px;top:376px;width:20px;height:11px;background:#b4b4b4;border-top:1px solid #e8e8e8;border-left:1px solid #e8e8e8;border-right:1px solid #383838;border-bottom:1px solid #383838;box-shadow:inset -1px -1px 0 #787878, inset 1px 1px 0 #d0d0d0"></div>
<div class="a" style="left:579px;top:387px;width:20px;height:11px;background:#b4b4b4;border-top:1px solid #e8e8e8;border-left:1px solid #e8e8e8;border-right:1px solid #383838;border-bottom:1px solid #383838;box-shadow:inset -1px -1px 0 #787878, inset 1px 1px 0 #d0d0d0"></div>
<svg width="640" height="484" viewBox="0 0 640 484"><path d="M584,384h10l-5,-5z" fill="#000"/><path d="M584,390h10l-5,5z" fill="#000"/></svg>
<div class="a" style="left:604px;top:376px;width:11px;height:13px;background:#b4b4b4;border-top:1px solid #6c6c6c;border-left:1px solid #6c6c6c;border-right:1px solid #f4f4f4;border-bottom:1px solid #f4f4f4"></div>
<svg width="640" height="484" viewBox="0 0 640 484"><path d="M609.5,380v8" stroke="#000" stroke-width="1.2"/><path d="M607,382.5l2.5,-3.5l2.5,3.5z" fill="#000"/></svg>
<div class="a" style="left:68px;top:402px;width:47px;height:16px;background:#b4b4b4;border-top:1px solid #ececec;border-left:1px solid #ececec;border-right:1px solid #383838;box-shadow:inset -1px 0 0 #808080"></div>
<div class="a" style="left:75px;top:406px;white-space:pre;font-size:12px;line-height:13px;letter-spacing:-0.2px;color:#000">Scales</div>
<div class="a" style="left:7px;top:401px;width:61px;height:17px;background:#ececec"></div>
<div class="a" style="left:8px;top:402px;width:59px;height:16px;background:#333;border:2px solid #ff8c00;border-bottom:none"></div>
<div class="a" style="left:14px;top:406px;white-space:pre;font-size:12px;line-height:13px;letter-spacing:-0.7px;color:#fff">Histogram</div>
<div class="mono" style="left:204px;top:422px;color:#ececec">Mean  1.000007952 µs Median  1.000008338 µs Hits 1.815 khits</div>
<div class="mono" style="left:186px;top:433.5px;color:#ececec">Std Dev  38.3586 ps</div>
<div class="mono" style="left:348px;top:433.5px;color:#ececec">p-p  241.7 ps</div>
<div class="mono" style="left:468px;top:433.5px;color:#ececec">Peak 159 hits</div>
<div class="mono" style="left:30px;top:433.5px;color:#ececec">Y Scale  40 hits/</div>
<div class="mono" style="left:24px;top:445.3px;color:#ececec">Y Offset  0 hits</div>
<div class="mono" style="left:204px;top:445.3px;color:#ececec">µ±1σ  71.8%</div>
<div class="mono" style="left:204px;top:457px;color:#ececec">µ±2σ  97.6%</div>
<div class="mono" style="left:204px;top:468.8px;color:#ececec">µ±3σ  99.8%</div>
<div class="mono" style="left:348px;top:445.3px;color:#ececec">Min  999.8833 ns</div>
<div class="mono" style="left:348px;top:457px;color:#ececec">Max  1.0001250 µs</div>
<div class="a" style="left:623px;top:420px;width:12px;height:14px;background:#b4b4b4;border-top:1px solid #e8e8e8;border-left:1px solid #e8e8e8;border-right:1px solid #383838;border-bottom:1px solid #383838;box-shadow:inset -1px -1px 0 #787878, inset 1px 1px 0 #d0d0d0"></div>
<div class="a" style="left:623px;top:420px;white-space:pre;width:12px;text-align:center;font-size:12px;line-height:14px;font-weight:bold;color:#000">?</div>
<div class="a" style="left:0px;top:479px;width:640px;height:3px;background:#c8c8c8"></div>
<div class="a" style="left:0px;top:482px;width:640px;height:2px;background:#000"></div>
</div></body></html>
